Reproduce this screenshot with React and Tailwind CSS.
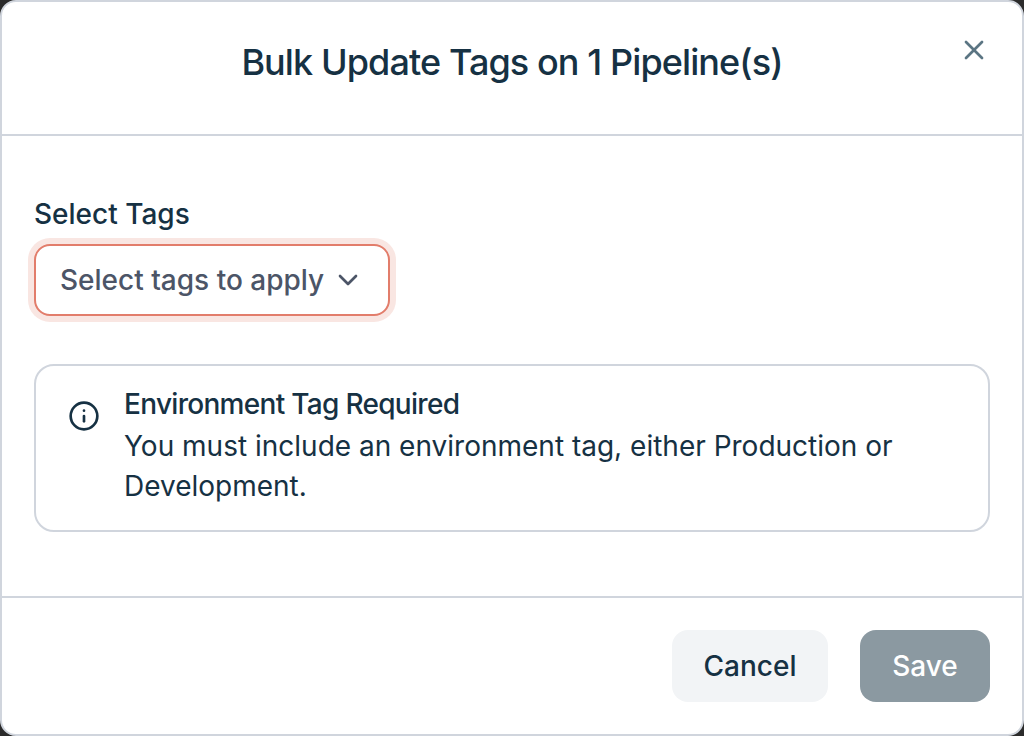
import React from "react";
import { X, ChevronDown, Info } from "lucide-react";

const App = () => {
  return (
    <div className="w-[1024px] h-[736px] bg-[#2b2b2b] overflow-hidden font-['Inter',sans-serif]">
      <div className="w-full h-full flex flex-col bg-white border-2 border-[#d0d5dd] rounded-[16px] overflow-hidden">
        <div className="relative h-[132px] shrink-0 flex items-center justify-center">
          <h2 className="text-[36px] leading-[40px] font-medium tracking-[-0.9px] text-[#163143] mb-[12px]">
            Bulk Update Tags on 1 Pipeline(s)
          </h2>
          <button className="absolute right-[32px] top-[32px] text-[#5b7583]">
            <X size={32} strokeWidth={2} />
          </button>
        </div>

        <div className="flex-1 flex flex-col border-y-2 border-[#d0d5dd] px-[32px] pt-[62px]">
          <label className="text-[28px] leading-[32px] font-medium text-[#163143] mb-[14px]">
            Select Tags
          </label>
          <div className="self-start w-[356px] h-[72px] flex items-center pl-[24px] gap-[8px] rounded-[16px] border-2 border-[#e27d6b] shadow-[0_0_0_6px_#f9e6e2] bg-white">
            <span className="text-[28px] leading-[36px] font-medium text-[#4c5567]">
              Select tags to apply
            </span>
            <ChevronDown size={32} strokeWidth={2} className="text-[#4c5567]" />
          </div>

          <div className="mt-[48px] h-[168px] flex border-2 border-[#d0d5dd] rounded-[20px] pl-[32px] pr-[32px] pt-[20px]">
            <Info size={32} strokeWidth={2} className="text-[#163143] mt-[14px] shrink-0" />
            <div className="ml-[24px]">
              <div className="text-[28px] leading-[36px] font-medium tracking-[-0.7px] text-[#163143]">
                Environment Tag Required
              </div>
              <div className="text-[28px] leading-[40px] text-[#163143] mt-[4px]">
                You must include an environment tag, either Production or Development.
              </div>
            </div>
          </div>
        </div>

        <div className="h-[136px] shrink-0 flex items-start justify-end gap-[32px] pt-[32px] pr-[32px]">
          <button className="w-[156px] h-[72px] rounded-[16px] bg-[#f2f4f6] text-[28px] font-medium text-[#163143]">
            Cancel
          </button>
          <button className="w-[130px] h-[72px] rounded-[16px] bg-[#8b99a1] text-[28px] font-medium text-white">
            Save
          </button>
        </div>
      </div>
    </div>
  );
};

export default App;
